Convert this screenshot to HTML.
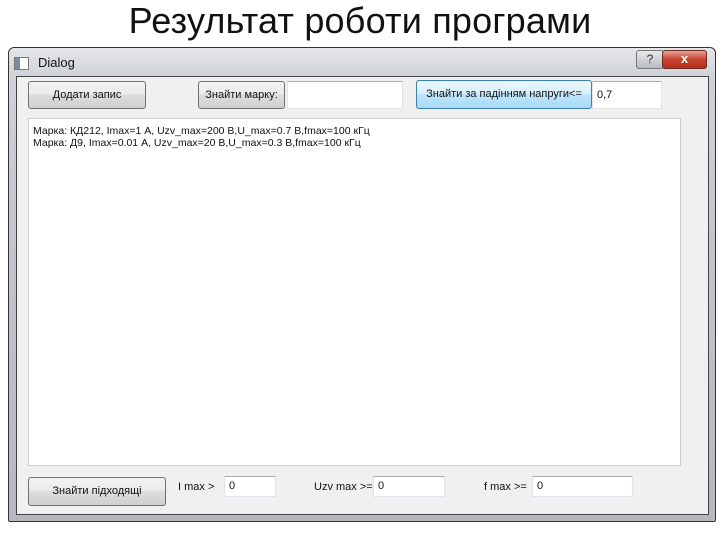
<!DOCTYPE html>
<html><head><meta charset="utf-8"><style>
body{margin:0;width:720px;height:540px;background:#fff;position:relative;overflow:hidden;font-family:"Liberation Sans",sans-serif}
.a{position:absolute}
h1{position:absolute;left:0;width:720px;top:0px;margin:0;text-align:center;font-weight:normal;font-size:36px;color:#111;letter-spacing:0.2px}
.frame{left:8px;top:47px;width:706px;height:473px;background:linear-gradient(#e4e6e9,#cfd3d8 6%,#c2c6cb 40%,#b5b9bf);border:1px solid #333;border-radius:6px 6px 2px 2px}
.client{left:16px;top:76px;width:691px;height:437px;background:#f0f0f0;border:1px solid #444}
.btn{position:absolute;border:1px solid #707070;border-radius:3px;background:linear-gradient(#f2f2f2,#ebebeb 45%,#dddddd 50%,#cfcfcf);font-size:11px;color:#111;text-align:center;box-sizing:border-box}
.inp{position:absolute;background:#fff;border:1px solid #e2e3ea;border-top-color:#abadb3;box-sizing:border-box;font-size:11px;padding:0 4px;color:#111}
.lbl{position:absolute;font-size:11px;color:#111}
.txt{left:28px;top:118px;width:653px;height:348px;background:#fff;border:1px solid #ccc;box-sizing:border-box;font-size:10.5px;padding:6px 4px;line-height:12px;color:#111}
</style></head><body>
<h1>Результат роботи програми</h1>
<div class="a frame"></div>
<div class="a" style="left:14px;top:57px;width:13px;height:11px;border:1px solid #777;background:linear-gradient(90deg,#7a8da0 40%,#fff 40%)"></div>
<div class="a" style="left:38px;top:55px;font-size:13px;color:#111">Dialog</div>
<div class="a" style="left:636px;top:50px;width:26px;height:17px;border:1px solid #777;border-radius:3px;background:linear-gradient(#e8e8e8,#b8bcc2);font-size:12px;text-align:center;color:#333;line-height:16px">?</div>
<div class="a" style="left:662px;top:50px;width:43px;height:17px;border:1px solid #6d2a20;border-radius:3px;background:linear-gradient(#e8a497,#c7422c 50%,#b83020);font-size:13px;font-weight:bold;text-align:center;color:#fff;line-height:16px">x</div>
<div class="a client"></div>
<div class="btn" style="left:28px;top:81px;width:118px;height:28px;line-height:26px">Додати запис</div>
<div class="btn" style="left:198px;top:81px;width:87px;height:28px;line-height:26px">Знайти марку:</div>
<div class="inp" style="left:287px;top:81px;width:116px;height:28px"></div>
<div class="btn" style="left:416px;top:80px;width:176px;height:29px;line-height:27px;border-color:#3c7fb1;background:linear-gradient(#eaf6fd,#d9f0fc 45%,#bee6fd 50%,#a7d9f5)">Знайти за падінням напруги&lt;=</div>
<div class="inp" style="left:592px;top:81px;width:70px;height:28px;line-height:26px">0,7</div>
<div class="a txt">Марка: КД212, Imax=1 А, Uzv_max=200 В,U_max=0.7 В,fmax=100 кГц<br>Марка: Д9, Imax=0.01 А, Uzv_max=20 В,U_max=0.3 В,fmax=100 кГц</div>
<div class="btn" style="left:28px;top:477px;width:138px;height:29px;line-height:27px">Знайти підходящі</div>
<div class="lbl" style="left:178px;top:481px">I max &gt;</div>
<div class="inp" style="left:224px;top:476px;width:52px;height:21px;line-height:19px">0</div>
<div class="lbl" style="left:314px;top:481px">Uzv max &gt;=</div>
<div class="inp" style="left:373px;top:476px;width:72px;height:21px;line-height:19px">0</div>
<div class="lbl" style="left:484px;top:481px">f max &gt;=</div>
<div class="inp" style="left:532px;top:476px;width:101px;height:21px;line-height:19px">0</div>
</body></html>
